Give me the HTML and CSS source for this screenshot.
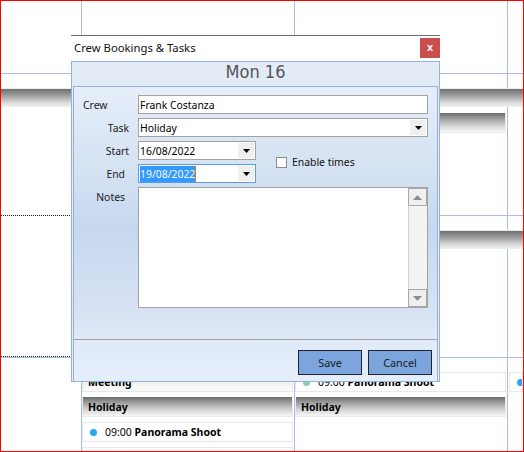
FILE: index.html
```html
<!DOCTYPE html>
<html>
<head>
<meta charset="utf-8">
<link rel="stylesheet" href="styles.css">
</head>
<body>
<div class="screen">
  <div class="cal">
    <div class="week week-0">
      <div class="cell c0"></div>
      <div class="cell c1"></div>
      <div class="cell c2"></div>
      <div class="cell c3"></div>
    </div>
    <div class="week week-1">
      <div class="cell c0 dotted"></div>
      <div class="cell c1 solid"></div>
      <div class="cell c2 solid"><div class="cell-body top-gap"><div class="ev ev-bar">Holiday</div></div></div>
      <div class="cell c3 solid"></div>
      <div class="span-bar"></div>
    </div>
    <div class="week week-2">
      <div class="cell c0 dotted"></div>
      <div class="cell c1"></div>
      <div class="cell c2"></div>
      <div class="cell c3"></div>
      <div class="span-bar"></div>
    </div>
    <div class="week week-3">
      <div class="cell c0"></div>
      <div class="cell c1">
        <div class="cell-body">
          <div class="ev ev-light">Meeting</div>
          <div class="ev ev-bar">Holiday</div>
          <div class="ev ev-item"><span class="dot dot-blue"></span><span class="time">09:00</span>&nbsp;<b>Panorama Shoot</b></div>
          <div class="ev ev-item"></div>
        </div>
      </div>
      <div class="cell c2">
        <div class="cell-body">
          <div class="ev ev-item"><span class="dot dot-green"></span><span class="time">09:00</span>&nbsp;<b>Panorama Shoot</b></div>
          <div class="ev ev-bar">Holiday</div>
        </div>
      </div>
      <div class="cell c3">
        <div class="cell-body edge">
          <div class="ev ev-item"><span class="dot dot-blue"></span></div>
        </div>
      </div>
    </div>
  </div>

  <div class="dialog">
    <div class="titlebar">
      <span class="title">Crew Bookings &amp; Tasks</span>
      <span class="close">x</span>
    </div>
    <div class="dlg-body">
      <div class="day">Mon 16</div>
      <div class="panel">
        <div class="form">
          <label class="lbl lbl-left">Crew</label>
          <div class="field span">Frank Costanza</div>

          <label class="lbl">Task</label>
          <div class="field span"><span>Holiday</span>
            <span class="drop"><svg width="7" height="4" viewBox="0 0 7 4"><polygon points="0,0 7,0 3.5,4" fill="#000"/></svg></span>
          </div>

          <label class="lbl">Start</label>
          <div class="field"><span>16/08/2022</span>
            <span class="drop"><svg width="7" height="4" viewBox="0 0 7 4"><polygon points="0,0 7,0 3.5,4" fill="#000"/></svg></span>
          </div>

          <div class="check-wrap"><span class="check"></span><span>Enable times</span></div>

          <label class="lbl lbl-narrow">End</label>
          <div class="field focus"><span class="selected">19/08/2022</span><span class="caret"></span>
            <span class="drop"><svg width="7" height="4" viewBox="0 0 7 4"><polygon points="0,0 7,0 3.5,4" fill="#000"/></svg></span>
          </div>

          <label class="lbl lbl-narrow lbl-top">Notes</label>
          <div class="field span notes">
            <div class="notes-text"></div>
            <div class="scroll">
              <div class="sbtn"><svg width="9" height="5" viewBox="0 0 9 5"><polygon points="0,5 9,5 4.5,0" fill="#8d8d8d"/></svg></div>
              <div class="track"></div>
              <div class="sbtn"><svg width="9" height="5" viewBox="0 0 9 5"><polygon points="0,0 9,0 4.5,5" fill="#8d8d8d"/></svg></div>
            </div>
          </div>
        </div>
        <div class="sep"></div>
        <div class="buttons">
          <span class="btn">Save</span>
          <span class="btn">Cancel</span>
        </div>
      </div>
    </div>
  </div>
</div>
</body>
</html>
```

FILE: styles.css
```css
* { box-sizing: border-box; }
html, body { margin: 0; padding: 0; background: #fff; }
body { font-family: "Noto Sans", "Open Sans", sans-serif; color: #000; }

.screen {
  position: relative;
  width: 524px;
  height: 452px;
  border: 1px solid #ff0000;
  overflow: hidden;
  background: #fff;
}

/* ---------- background calendar ---------- */
.cal { display: flex; flex-direction: column; height: 100%; }
.week { display: grid; grid-template-columns: 81px 213px 213px 1fr; flex: none; }
.week-0 { height: 73px; border-bottom: 1px solid #a7bee6; }
.week-1 { height: 142px; grid-template-rows: 15px 18px 1fr; }
.week-2 { height: 142px; grid-template-rows: 15px 18px 1fr; border-bottom: 1px solid #a7bee6; }
.week-3 { flex: 1 1 0; min-height: 0; overflow: hidden; }

.cell { grid-row: 1 / -1; border-right: 1px solid #a7bee6; min-width: 0; }
.c0 { grid-column: 1; }
.c1 { grid-column: 2; }
.c2 { grid-column: 3; }
.c3 { grid-column: 4; border-right: none; }
.dotted { border-bottom: 1px dotted #222; }
.solid { border-bottom: 1px solid #a7bee6; }

.span-bar {
  grid-row: 2;
  background: linear-gradient(#6f6f6f, #9c9c9c 35%, #d9d9d9 75%, #f2f2f2);
  box-shadow: 0 -1px 0 #ececec;
}
.week-1 .span-bar { grid-column: 1 / -1; }
.week-2 .span-bar { grid-column: 2 / -1; }

.cell-body { padding: 14px 1px 0 0; display: flex; flex-direction: column; gap: 5px; }
.cell-body.top-gap { padding-top: 39px; }
.cell-body.edge { padding-left: 1px; padding-right: 0; }

.ev {
  height: 20px;
  flex: none;
  display: flex;
  align-items: center;
  font-size: 10.5px;
  white-space: nowrap;
  overflow: hidden;
}
.ev-bar {
  font-weight: bold;
  padding-left: 5px;
  background: linear-gradient(#6b6b6b, #9e9e9e 30%, #d8d8d8 70%, #f6f6f6);
  border: 1px solid #ececec;
  border-top: none;
}
.ev-light {
  font-weight: bold;
  padding-left: 5px;
  background: linear-gradient(#cfcfcf, #f3f3f3 60%, #fafafa);
  border: 1px solid #e8e8e8;
}
.ev-item {
  border: 1px solid #e8e8e8;
  background: #fff;
  padding-left: 7px;
}
.ev-item b { font-weight: bold; }
.dot { width: 7px; height: 7px; border-radius: 50%; margin-right: 8px; flex: none; }
.dot-blue { background: #2aa7f2; }
.dot-green { background: #88cfa5; }

/* ---------- dialog ---------- */
.dialog {
  position: absolute;
  left: 70px;
  top: 34px;
  width: 369px;
  height: 347px;
  display: flex;
  flex-direction: column;
}
.titlebar {
  height: 26px;
  flex: none;
  border-top: 1px solid #6d6d6d;
  background: #fff;
  display: flex;
  justify-content: space-between;
  align-items: flex-start;
  padding-left: 3px;
}
.title { font-size: 11.3px; color: #111; margin-top: 4px; line-height: 16px; }
.close {
  width: 20px;
  height: 20px;
  margin-top: 2px;
  background: #c94f4e;
  color: #fff;
  font: bold 11px "Liberation Sans", sans-serif;
  display: flex;
  align-items: center;
  justify-content: center;
  padding-bottom: 2px;
}

.dlg-body {
  flex: 1;
  border: 1px solid #93b1e2;
  background: #e3ebf7;
  padding: 0 1px;
  display: flex;
  flex-direction: column;
}
.day {
  height: 24px;
  flex: none;
  text-align: center;
  font-family: "DejaVu Sans Condensed", "DejaVu Sans", sans-serif;
  font-stretch: condensed;
  font-size: 18px;
  line-height: 18px;
  padding-top: 1px;
  color: #555;
}
.panel {
  flex: 1;
  border: 1px solid #93b1e2;
  border-bottom: none;
  background: linear-gradient(#e6eef9 0%, #d3e1f2 30%, #c6d8ee 48%, #d6e2f3 75%, #dfe9f8 86%, #e5effc 100%);
  display: flex;
  flex-direction: column;
}
.form {
  height: 252px;
  flex: none;
  padding: 8px 9px 0 9px;
  display: grid;
  grid-template-columns: 55px 118px 1fr;
  grid-template-rows: 19px 19px 19px 19px 121px;
  row-gap: 4px;
  font-size: 10.4px;
}
.lbl {
  justify-self: end;
  align-self: center;
  margin-right: 9px;
  color: #1a1a1a;
  line-height: 14px;
}
.lbl-left { justify-self: start; margin-right: 0; }
.lbl-narrow { margin-right: 13px; }
.lbl-top { align-self: start; margin-top: 3px; }

.field {
  grid-column: 2;
  border: 1px solid #a2a2a2;
  background: #fff;
  display: flex;
  align-items: center;
  padding-left: 1px;
  line-height: 14px;
  white-space: nowrap;
  min-width: 0;
}
.field.span { grid-column: 2 / -1; }
.field.focus { border-color: #5a9de4; }
.drop {
  margin-left: auto;
  margin-right: 1px;
  width: 16px;
  height: 15px;
  background: #efefef;
  display: flex;
  align-items: center;
  justify-content: center;
  flex: none;
}
.drop svg { display: block; }
.selected { background: #3399ff; color: #f4f8ff; line-height: 16px; }
.caret { width: 1px; height: 16px; background: #d0801a; }

.check-wrap {
  grid-column: 3;
  grid-row: 3 / 5;
  align-self: center;
  display: flex;
  align-items: center;
  gap: 5px;
  margin-left: 20px;
  color: #111;
}
.check { width: 11px; height: 11px; border: 1px solid #8c8c8c; background: #fff; flex: none; }

.notes { align-items: stretch; padding-left: 0; }
.notes-text { flex: 1; }
.scroll { width: 19px; display: flex; flex-direction: column; flex: none; }
.sbtn {
  height: 18px;
  flex: none;
  border: 1px solid #a9a9a9;
  background: #efefef;
  display: flex;
  align-items: center;
  justify-content: center;
}
.track {
  flex: 1;
  border-left: 1px solid #d0d0d0;
  background: repeating-conic-gradient(#ececec 0 25%, #fbfbfb 0 50%) 0 0 / 2px 2px;
}

.sep { height: 1px; background: #a3a3a3; flex: none; }
.buttons {
  flex: 1;
  display: flex;
  justify-content: flex-end;
  align-items: flex-start;
  gap: 6px;
  padding: 10px 5px 0 0;
}
.btn {
  width: 64px;
  height: 25px;
  border: 1px solid #1e2430;
  background: #7ca5dd;
  display: flex;
  align-items: center;
  justify-content: center;
  font-size: 10.8px;
  color: #1a1a1a;
}
```
